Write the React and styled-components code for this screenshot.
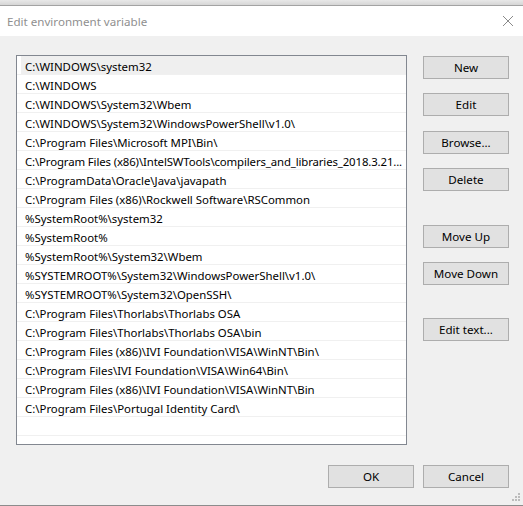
import React from 'react'
import styled, { createGlobalStyle } from 'styled-components'

const GlobalStyle = createGlobalStyle`
  html, body {
    margin: 0;
    padding: 0;
    background: #f0f0f0;
  }
  * { box-sizing: border-box; }
`

const paths = [
  'C:\\WINDOWS\\system32',
  'C:\\WINDOWS',
  'C:\\WINDOWS\\System32\\Wbem',
  'C:\\WINDOWS\\System32\\WindowsPowerShell\\v1.0\\',
  'C:\\Program Files\\Microsoft MPI\\Bin\\',
  'C:\\Program Files (x86)\\IntelSWTools\\compilers_and_libraries_2018.3.21...',
  'C:\\ProgramData\\Oracle\\Java\\javapath',
  'C:\\Program Files (x86)\\Rockwell Software\\RSCommon',
  '%SystemRoot%\\system32',
  '%SystemRoot%',
  '%SystemRoot%\\System32\\Wbem',
  '%SYSTEMROOT%\\System32\\WindowsPowerShell\\v1.0\\',
  '%SYSTEMROOT%\\System32\\OpenSSH\\',
  'C:\\Program Files\\Thorlabs\\Thorlabs OSA',
  'C:\\Program Files\\Thorlabs\\Thorlabs OSA\\bin',
  'C:\\Program Files (x86)\\IVI Foundation\\VISA\\WinNT\\Bin\\',
  'C:\\Program Files\\IVI Foundation\\VISA\\Win64\\Bin\\',
  'C:\\Program Files (x86)\\IVI Foundation\\VISA\\WinNT\\Bin',
  'C:\\Program Files\\Portugal Identity Card\\',
  '',
  '',
]

const sideButtons = [
  { label: 'New', top: 0 },
  { label: 'Edit', top: 14 },
  { label: 'Browse...', top: 15 },
  { label: 'Delete', top: 14 },
  { label: 'Move Up', top: 34 },
  { label: 'Move Down', top: 14 },
  { label: 'Edit text...', top: 33 },
]

const Window = styled.div`
  position: relative;
  width: 523px;
  height: 506px;
  display: flex;
  flex-direction: column;
  background: #f0f0f0;
  font-family: "Noto Sans", "Segoe UI", sans-serif;
  font-size: 11.4px;
  color: #000;
  border-bottom: 1px solid #8c8c8c;
`

const TopEdge = styled.div`
  height: 6px;
  background: linear-gradient(#e8e8e8, #d6d6d6);
  border-bottom: 1px solid #a3a3a3;
`

const TitleBar = styled.div`
  height: 30px;
  background: #fff;
  display: flex;
  align-items: center;
  justify-content: space-between;
  padding: 1px 9px 0 7px;
`

const Title = styled.span`
  color: #8f8f8f;
  font-size: 11.6px;
`

const CloseIcon = styled.svg`
  width: 12px;
  height: 12px;
  margin-top: -2px;
`

const Body = styled.div`
  display: flex;
  gap: 16px;
  padding: 19px 14px 0 16px;
`

const ListBox = styled.div`
  width: 391px;
  height: 390px;
  background: #fff;
  border: 1px solid #828790;
  overflow: hidden;
`

const Row = styled.div`
  height: 19px;
  line-height: 18px;
  padding: 2px 0 0 8px;
  border-bottom: 1px solid #f0f0f0;
  white-space: nowrap;
  overflow: hidden;
  letter-spacing: ${p => (p.$long ? '-0.13px' : 'normal')};
  background: ${p => (p.$hot ? 'linear-gradient(to right, #fff 4px, #efefef 4px)' : '#fff')};
`

const ButtonColumn = styled.div`
  display: flex;
  flex-direction: column;
  padding-top: 1px;
`

const Button = styled.button`
  width: 86px;
  height: 23px;
  margin-top: ${p => p.$top || 0}px;
  background: #e1e1e1;
  border: 1px solid #adadad;
  border-radius: 0;
  font-family: inherit;
  font-size: 11.6px;
  color: #000;
  padding: 0 0 1px;
  cursor: default;
`

const Footer = styled.div`
  display: flex;
  justify-content: flex-end;
  gap: 9px;
  padding: 20px 14px 0 0;
`

const Grip = styled.svg`
  position: absolute;
  right: 2px;
  bottom: 3px;
  width: 10px;
  height: 10px;
`

const App = () => {
  return (
    <>
      <GlobalStyle />
      <Window>
        <TopEdge />
        <TitleBar>
          <Title>Edit environment variable</Title>
          <CloseIcon viewBox="0 0 12 12">
            <path d="M1 1 L11 11 M11 1 L1 11" stroke="#8a8a8a" strokeWidth="1" fill="none" />
          </CloseIcon>
        </TitleBar>
        <Body>
          <ListBox>
            {paths.map((p, i) => (
              <Row key={i} $hot={i === 0} $long={p.length > 60}>{p}</Row>
            ))}
          </ListBox>
          <ButtonColumn>
            {sideButtons.map(b => (
              <Button key={b.label} $top={b.top}>{b.label}</Button>
            ))}
          </ButtonColumn>
        </Body>
        <Footer>
          <Button>OK</Button>
          <Button>Cancel</Button>
        </Footer>
        <Grip viewBox="0 0 10 10">
          <rect x="7" y="1" width="2" height="2" fill="#bcbcbc" />
          <rect x="4" y="4" width="2" height="2" fill="#bcbcbc" />
          <rect x="7" y="4" width="2" height="2" fill="#bcbcbc" />
          <rect x="1" y="7" width="2" height="2" fill="#bcbcbc" />
          <rect x="4" y="7" width="2" height="2" fill="#bcbcbc" />
          <rect x="7" y="7" width="2" height="2" fill="#bcbcbc" />
        </Grip>
      </Window>
    </>
  )
}

export default App
